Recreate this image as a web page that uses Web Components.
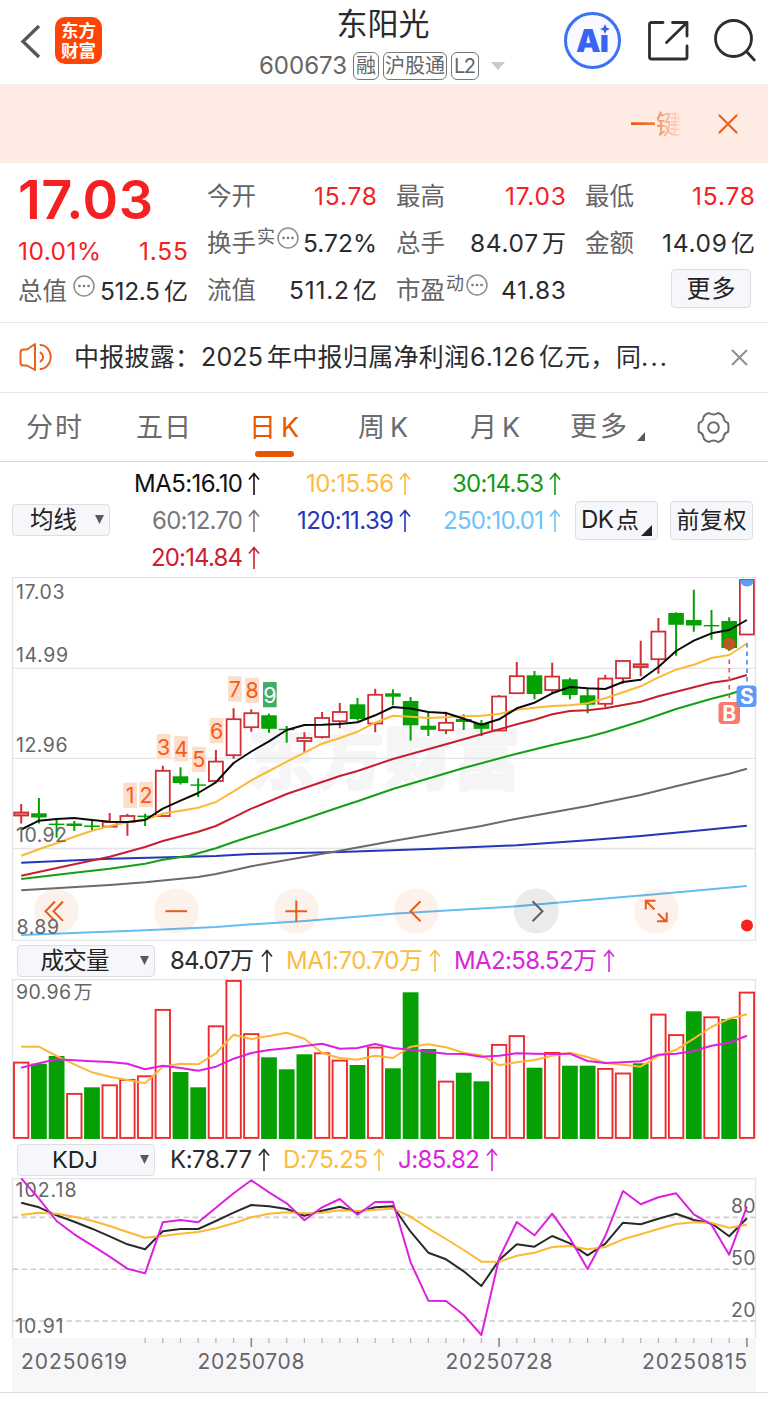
<!DOCTYPE html>
<html lang="zh-CN">
<head>
<meta charset="utf-8">
<title>东阳光 600673</title>
<style>
  body {
    margin: 0;
    width: 768px;
    height: 1403px;
    overflow: hidden;
    background: #fff;
    color: #2b2b2d;
    font-family: Inter, "Noto Sans CJK SC", sans-serif;
    font-size: 24px;
    line-height: 1;
  }
</style>
</head>
<body>
<app-header code="600673" name="东阳光"></app-header>
<promo-banner>一键</promo-banner>
<quote-panel>
  <quote-price slot="c1" price="17.03" percent="10.01%" change="1.55"></quote-price>
  <quote-cell slot="c1" label="总值" info value="512.5" w="60" unit="亿"></quote-cell>
  <quote-cell slot="c2" label="今开" value="15.78" w="63" up></quote-cell>
  <quote-cell slot="c2" label="换手" note="实" info value="5.72%" w="74"></quote-cell>
  <quote-cell slot="c2" label="流值" value="511.2" w="60" unit="亿"></quote-cell>
  <quote-cell slot="c3" label="最高" value="17.03" w="61" up></quote-cell>
  <quote-cell slot="c3" label="总手" value="84.07" w="68" unit="万"></quote-cell>
  <quote-cell slot="c3" label="市盈" note="动" info value="41.83" w="65"></quote-cell>
  <quote-cell slot="c4" label="最低" value="15.78" w="63" up></quote-cell>
  <quote-cell slot="c4" label="金额" value="14.09" w="65" unit="亿"></quote-cell>
  <tool-button slot="c4" style="--w: 78px; --h: 37px; align-self: flex-end; margin: 2px 4px 0 0"><fit-text w="49">更多</fit-text></tool-button>
</quote-panel>
<news-bar></news-bar>
<period-tabs></period-tabs>
<ma-panel></ma-panel>
<kline-chart></kline-chart>
<indicator-bar name="成交量" name-width="69">
  <trend-value w="84" style="margin-left: 15.500px; --gap: 7px">84.07万</trend-value>
  <trend-value w="137" style="color: #fbbc3f; margin-left: 11.500px; --gap: 6px">MA1:70.70万</trend-value>
  <trend-value w="143" style="color: #d926dc; margin-left: 11.500px; --gap: 6px">MA2:58.52万</trend-value>
</indicator-bar>
<volume-chart></volume-chart>
<indicator-bar name="KDJ" name-width="46">
  <trend-value w="82" style="margin-left: 15.500px; --gap: 5.500px">K:78.77</trend-value>
  <trend-value w="85" style="color: #fbbc3f; margin-left: 12px; --gap: 5px">D:75.25</trend-value>
  <trend-value w="82" style="color: #d926dc; margin-left: 11.500px; --gap: 6px">J:85.82</trend-value>
</indicator-bar>
<kdj-chart></kdj-chart>
<date-axis></date-axis>

<script>
const UP = '#cf3036';
const DOWN = '#04a004';
const COUNT = 42;

// Horizontal centre of a trading day in the charts
const dayX = index => 21.2 + index * 17.7;

class BaseElement extends HTMLElement {
  connectedCallback() {
    if (this.shadowRoot) return;
    const root = this.attachShadow({ mode: 'open' });
    root.innerHTML = `<style>:host { display: block; box-sizing: border-box; } svg { display: block; } ${this.styles()}</style>${this.render()}`;
  }

  attr(name, fallback = '') {
    return this.getAttribute(name) || fallback;
  }

  styles() { return ''; }

  render() { return '<slot></slot>'; }
}

class AppHeader extends BaseElement {
  styles() {
    return `
      :host { height: 85px; border-bottom: 1px solid #eeeff1; display: grid; grid-template-columns: 259px 250px 1fr; }
      .left { display: flex; padding: 17px 0 0 20px; }
      .back { margin: 7px 14px 0 0; }
      .logo { width: 47px; height: 47px; border-radius: 10px; background: #ff4505; color: #fff; text-align: center;
        font-size: 17.5px; font-weight: 700; line-height: 19.5px; padding-top: 4px; box-sizing: border-box; }
      .title { text-align: center; font-size: 31px; margin-top: 8px; height: 44px; line-height: 31px; padding-right: 2px; }
      .sub { display: flex; align-items: center; height: 28px; color: #666; }
      .tag { box-sizing: border-box; height: 28px; border: 1.5px solid #777; border-radius: 6px; margin-right: 4px;
        font-size: 20px; line-height: 26px; text-align: center; white-space: nowrap; }
      .code { width: 94px; }
      .right { display: flex; padding: 12px 0 0 55px; }
      .ai { width: 57px; height: 57px; box-sizing: border-box; border: 3px solid #3b71f3; border-radius: 50%; color: #3764f4;
        font-size: 31px; font-weight: 900; line-height: 52px; text-align: center; position: relative; background: #f8faff; }
      .ai svg { position: absolute; right: 8px; top: 9px; }
    `;
  }

  render() {
    return `
      <div class="left">
        <svg class="back" width="21" height="36" fill="none" stroke="#58585a" stroke-width="3.4"><path d="M19 2 3 17.500 19 33"/></svg>
        <div class="logo">东方<br>财富</div>
      </div>
      <div>
        <div class="title">${this.attr('name')}</div>
        <div class="sub">
          <span class="code"><fit-text w="88">${this.attr('code')}</fit-text></span>
          <span class="tag" style="width: 26px">融</span>
          <span class="tag" style="width: 64px">沪股通</span>
          <span class="tag" style="width: 28px"><fit-text w="22">L2</fit-text></span>
          <svg width="14" height="8" style="margin-left: 8px"><path fill="#c9c9cb" d="M0 0h14l-7 8z"/></svg>
        </div>
      </div>
      <div class="right">
        <div class="ai"><fit-text w="33">Aı</fit-text><svg width="10" height="10"><path fill="#3764f4" d="M5 0 6.500 3.500 10 5 6.500 6.500 5 10 3.500 6.500 0 5 3.500 3.500z"/></svg></div>
        <svg width="42" height="43" style="margin: 8px 0 0 26px" fill="none" stroke="#2e2e30" stroke-width="2.800" stroke-linecap="round" stroke-linejoin="round"><path d="M16 2.500H4.500q-2 0-2 2V37q0 2 2 2H38q2 0 2-2V26M25.500 2.500H40V16M19.500 22.500 39.500 3"/></svg>
        <svg width="44" height="46" style="margin: 6px 0 0 24px" fill="none" stroke="#2e2e30" stroke-width="2.800" stroke-linecap="round"><circle cx="20.500" cy="20.500" r="18"/><path d="M33.500 33.500 41.300 42"/></svg>
      </div>
    `;
  }
}

class PromoBanner extends BaseElement {
  styles() {
    return `
      :host { height: 78px; background: #feece4; display: flex; align-items: center; justify-content: flex-end; }
      span { font-size: 26px; font-weight: 500; padding-top: 2px; background: linear-gradient(90deg, #e65000 0, #ec7f48 45%, #f2a886 62%, #fce4d9 100%);
        -webkit-background-clip: text; background-clip: text; color: transparent; }
    `;
  }

  render() {
    return `
      <span><slot></slot></span>
      <svg width="20" height="20" style="margin: 0 30px 0 36px" stroke="#e9631f" stroke-width="2.200" stroke-linecap="round"><path d="M1.500 1.500l17 17M18.500 1.500l-17 17"/></svg>
    `;
  }
}

class QuotePanel extends BaseElement {
  styles() {
    return `
      :host { height: 160px; border-bottom: 1px solid #e6e6e9; padding: 10px 13px 0 19px; display: grid;
        grid-template-columns: 169px 170px 170px 170px; column-gap: 19px; }
      .col { display: flex; flex-direction: column; }
    `;
  }

  render() {
    return [1, 2, 3, 4].map(n => `<div class="col"><slot name="c${n}"></slot></div>`).join('');
  }
}

class QuotePrice extends BaseElement {
  styles() {
    return `
      :host { color: #f42022; height: 95px; }
      .price { font-size: 54px; font-weight: 600; height: 65.500px; line-height: 54px; margin-left: -1px; }
      .row { display: flex; justify-content: space-between; font-size: 24.500px; margin-left: -1px; }
    `;
  }

  render() {
    return `
      <div class="price"><fit-text w="135">${this.attr('price')}</fit-text></div>
      <div class="row"><fit-text w="83">${this.attr('percent')}</fit-text><fit-text w="49">${this.attr('change')}</fit-text></div>
    `;
  }
}

class QuoteCell extends BaseElement {
  styles() {
    return `
      :host { height: 47px; display: flex; align-items: center; color: #2b2b2d; }
      :host([up]) .value { color: #f42022; }
      .label { color: #646466; font-size: 24.500px; }
      .note { color: #646466; font-size: 18px; margin: -13px 2px 0 1px; }
      .info { margin-top: -11px; }
      :host([label="总值"]) .info { margin-left: 6px; }
      :host([label="总值"]) .label { margin-left: -1px; }
      .value { margin-left: auto; display: flex; align-items: center; font-size: 24.500px; }
      .unit { margin-left: 4px; font-size: 24px; }
    `;
  }

  render() {
    const note = this.hasAttribute('note') ? `<span class="note">${this.attr('note')}</span>` : '';
    const info = this.hasAttribute('info')
      ? '<svg class="info" width="22" height="22"><circle cx="11" cy="11" r="10" fill="none" stroke="#8d8d8f" stroke-width="1.500"/><g fill="#777"><circle cx="6.500" cy="11" r="1.300"/><circle cx="11" cy="11" r="1.300"/><circle cx="15.500" cy="11" r="1.300"/></g></svg>'
      : '';
    const unit = this.hasAttribute('unit') ? `<span class="unit">${this.attr('unit')}</span>` : '';
    return `<span class="label">${this.attr('label')}</span>${note}${info}<span class="value"><fit-text w="${this.attr('w')}">${this.attr('value')}</fit-text>${unit}</span>`;
  }
}

class ToolButton extends BaseElement {
  styles() {
    return `
      :host { width: var(--w); height: var(--h); box-sizing: content-box; border: 1px solid #dcdee2; border-radius: 4px; background: #f6f7fa;
        display: flex; align-items: center; justify-content: center; color: #222; position: relative; }
    `;
  }
}

class NewsBar extends BaseElement {
  styles() {
    return `
      :host { height: 70px; border-bottom: 1px solid #e6e6e9; display: flex; align-items: center; padding: 0 20px 1px 19px; }
      .text { flex: 1; white-space: nowrap; font-size: 25px; padding-left: 20px; }
      .n { margin: 0 4px 0 1px; }
    `;
  }

  render() {
    return `
      <svg width="35" height="30" fill="none" stroke="#e8601c" stroke-width="2" stroke-linejoin="round" stroke-linecap="round"><path d="M16 2v26L8 23.500H4.500q-3 0-3-3v-10q0-3 3-3H8zM21.500 10.500q5.500 4.500 0 9M21.500 3q5.500 0 8.700 6 3 6 0 12-3.200 6-8.700 6"/></svg>
      <div class="text"><fit-text w="126">中报披露：</fit-text><span class="n"><fit-text w="62">2025</fit-text></span><fit-text w="202">年中报归属净利润</fit-text><span class="n"><fit-text w="65">6.126</fit-text></span><fit-text w="102">亿元，同</fit-text><fit-text w="26">...</fit-text></div>
      <svg width="17" height="17" stroke="#8f8f91" stroke-width="2"><path d="M1 1l15 15M16 1 1 16"/></svg>
    `;
  }
}

class PeriodTabs extends BaseElement {
  styles() {
    return `
      :host { height: 69px; border-bottom: 1.500px solid #d3d6dd; padding-left: 26px; color: #6b6b6d; font-size: 27px;
        display: grid; grid-template-columns: 110px 113px 109px 112px 100px 127px 1fr; align-items: center; }
      .on { color: #ea5504; position: relative; }
      .on::after { content: ''; position: absolute; left: 6px; top: 37px; width: 39px; height: 6px; border-radius: 3px; background: #ea5504; }
      .gap { margin-left: 5px; }
    `;
  }

  render() {
    return `
      <span><fit-text w="56">分时</fit-text></span>
      <span><fit-text w="55">五日</fit-text></span>
      <span class="on">日<span class="gap">K</span></span>
      <span>周<span class="gap">K</span></span>
      <span>月<span class="gap">K</span></span>
      <span><fit-text w="57">更多</fit-text><svg width="8" height="9" style="display: inline-block; margin-left: 10px; vertical-align: -5px"><path fill="#58585a" d="M8 0v9H0z"/></svg></span>
      <svg width="33" height="33" viewBox="-16.500 -16.500 33 33" fill="none" stroke="#6b6b6d" stroke-width="2" stroke-linejoin="round"><path d="M-4.500-14.500Q0-11.500 4.500-14.500Q8.500-13.500 10-10.500Q10-6 14.500-4.500Q15.500 0 14.500 4.500Q10 6 10 10.500Q8.500 13.500 4.500 14.500Q0 11.500-4.500 14.500Q-8.500 13.500-10 10.500Q-10 6-14.500 4.500Q-15.500 0-14.500-4.500Q-10-6-10-10.500Q-8.500-13.500-4.500-14.500Z"/><circle r="5.300"/></svg>
    `;
  }
}

class TrendValue extends BaseElement {
  styles() {
    return ':host { display: flex; align-items: center; justify-content: flex-end; white-space: nowrap; } svg { margin: 0 1.500px 0 var(--gap, 4.500px); }';
  }

  render() {
    return `
      <fit-text w="${this.attr('w')}">${this.textContent}</fit-text>
      <svg width="12" height="23" fill="none" stroke="currentColor" stroke-width="1.600"><path d="M6 23V1.500M1 7.500l5-6 5 6"/></svg>
    `;
  }
}

class SelectBox extends BaseElement {
  styles() {
    return `
      :host { width: var(--w); height: 32px; border: 1px solid #dcdee2; border-radius: 4px; background: #f6f7fa;
        display: flex; align-items: center; justify-content: center; padding-right: var(--pr, 21px); font-size: 23.500px; color: #222; position: relative; }
      svg { position: absolute; right: 5px; top: 10px; }
    `;
  }

  render() {
    return '<slot></slot><svg width="9" height="9"><path fill="#5a5a5c" d="M0 0h9L4.500 9z"/></svg>';
  }
}

class MaPanel extends BaseElement {
  styles() {
    return `
      :host { height: 115px; display: grid; grid-template-columns: 98px 151px 151px 150px 1fr; padding-left: 12px; align-items: center; }
      .col { display: grid; grid-template-rows: 37px 37px 37px; align-self: start; padding-top: 3px; }
      .tools { display: flex; gap: 12px; padding-left: 13px; margin-top: 1px; }
      .corner { position: absolute; right: 5px; bottom: 3px; }
    `;
  }

  render() {
    return `
      <select-box style="--w: 98px; --pr: 15px"><fit-text w="47">均线</fit-text></select-box>
      <div class="col">
        <trend-value w="109" style="color: #111">MA5:16.10</trend-value>
        <trend-value w="91" style="color: #77777a">60:12.70</trend-value>
        <trend-value w="92" style="color: #cc2030">20:14.84</trend-value>
      </div>
      <div class="col">
        <trend-value w="88" style="color: #fbbc3f">10:15.56</trend-value>
        <trend-value w="97" style="color: #2438b8">120:11.39</trend-value>
      </div>
      <div class="col">
        <trend-value w="92" style="color: #169a16">30:14.53</trend-value>
        <trend-value w="101" style="color: #6fc3f8">250:10.01</trend-value>
      </div>
      <div class="tools">
        <tool-button style="--w: 68px; --h: 37px; padding-right: 13px"><fit-text w="33">DK</fit-text><span style="margin-left: 2px; font-size: 23px">点</span><svg width="11" height="11" style="position: absolute; right: 5px; bottom: 3px"><path fill="#222" d="M11 0v11H0z"/></svg></tool-button>
        <tool-button style="--w: 81px; --h: 37px; font-size: 23px"><fit-text w="70">前复权</fit-text></tool-button>
      </div>
    `;
  }
}

class IndicatorBar extends BaseElement {
  styles() {
    return ':host { height: 38px; display: flex; align-items: center; padding: 1px 0 0 16.500px; }';
  }

  render() {
    return `<select-box style="--w: 138px"><fit-text w="${this.attr('name-width')}">${this.attr('name')}</fit-text></select-box><slot></slot>`;
  }
}

class ChartElement extends BaseElement {
  polyline(values, color, width = 2) {
    const points = values.map((y, i) => `${dayX(i).toFixed(1)},${y}`).join(' ');
    return `<polyline points="${points}" fill="none" stroke="${color}" stroke-width="${width}" stroke-linejoin="round"/>`;
  }

  // pairs: [day, y, day, y, ...], days in between lie on the straight line
  sparse(pairs, color) {
    let points = '';
    for (let i = 0; i < pairs.length; i += 2) points += `${dayX(pairs[i]).toFixed(1)},${pairs[i + 1]} `;
    return `<polyline points="${points}" fill="none" stroke="${color}" stroke-width="2"/>`;
  }

  label(text, x, y, length, size = 19.5, color = '#666668') {
    return `<text x="${x}" y="${y}" font-size="${size}" fill="${color}" textLength="${length}">${text}</text>`;
  }
}

// day: [rising, high, body top, body bottom, low]
const CANDLES = [
  [1, 804, 812.5, 815.5, 823.5], [0, 798, 813.3, 817.5, 823.5], [0, 818.3, 823.6, 825, 837.7], [0, 821, 823.5, 826, 831],
  [0, 820.5, 825.5, 827, 830], [1, 813, 822, 826.6, 827], [1, 813.7, 816, 822, 835.7], [0, 813.7, 815.6, 817, 826],
  [1, 765.7, 770.8, 816, 816.5], [0, 767.3, 776.3, 783, 784.5], [0, 778.3, 784.4, 785.8, 797], [1, 750, 761.6, 781, 781.3],
  [1, 708.3, 719.2, 755.2, 758.7], [1, 709.3, 713.2, 727.2, 731.7], [0, 713.7, 715.3, 728.8, 732.7], [0, 726, 728.8, 730.2, 742.7],
  [1, 732.3, 738, 741, 752], [1, 712, 718, 737, 738.5], [1, 703, 712, 721.2, 728.3], [0, 698, 704.3, 719, 720.5],
  [1, 688.7, 694.8, 723.5, 732.3], [0, 689.3, 693.3, 696.7, 705.3], [0, 697, 701, 725.3, 740.7], [0, 712.7, 725.7, 729.8, 736],
  [1, 711.7, 722.8, 730.2, 734], [0, 714.3, 719, 722, 730], [0, 720, 723, 728.8, 736], [1, 695, 696.5, 730.5, 731],
  [1, 662, 676.2, 693.2, 693.5], [0, 671, 675.3, 694, 699.3], [1, 662.7, 676.6, 690, 693], [0, 677.7, 679.3, 695, 699.3],
  [0, 688.3, 695.3, 704.7, 713.3], [1, 674.7, 678.6, 703.8, 707.3], [1, 660.5, 661, 678.2, 683.7], [1, 640.7, 664.3, 667, 676.3],
  [1, 618, 631.6, 659.2, 673.7], [0, 612.3, 613, 624.8, 655.7], [0, 589.7, 620, 625.5, 631.7], [0, 610, 625, 626.4, 639.7],
  [0, 617.3, 621, 648, 651], [1, 580, 580, 634.5, 635],
];

const MA5 = [829.5, 820.7, 819, 818, 820, 821.7, 822, 820, 808.7, 800.7, 793, 782.3, 763, 751.5, 741.3, 730, 725, 724.7, 724, 722.3, 715.3,
  707, 708.5, 712, 713, 718.7, 724.7, 719.3, 708.3, 702.7, 693.3, 687, 688.3, 689, 682, 679.7, 667, 651, 640.7, 633.3, 630, 620];
const MA10 = [855.7, 849.3, 843.3, 836.7, 830.7, 826, 822.3, 819.7, 813.7, 810.7, 807.7, 802, 791.3, 780.3, 771, 761.7, 752.7, 743.7, 738, 731.7, 722.7,
  715.7, 716.7, 718, 717.3, 716.3, 715.7, 714, 709.7, 707.7, 706, 705.3, 703.3, 698.3, 692.3, 686.3, 677.3, 669.7, 664.7, 658, 655, 643.5];

class KlineChart extends ChartElement {
  styles() { return ':host { height: 364px; }'; }

  candle([rising, high, top, bottom, low], index) {
    const x = dayX(index);
    const left = (x - 7).toFixed(1);
    if (!rising) {
      return `<path stroke="${DOWN}" stroke-width="2" d="M${x} ${high}V${low}"/><rect x="${(x - 7.8).toFixed(1)}" y="${top}" width="15.600" height="${bottom - top}" fill="${DOWN}"/>`;
    }
    const fill = bottom - top < 3.05 && index !== 16 ? '#e88b8d' : '#fff';
    return `<path stroke="${UP}" stroke-width="2" d="M${x} ${high}V${top}M${x} ${bottom}V${low}"/><rect x="${left}" y="${top}" width="14" height="${bottom - top}" fill="${fill}" stroke="${UP}" stroke-width="1.800"/>`;
  }

  counts() {
    const boxes = [[123.3, 782.7], [139.2, 782], [156.7, 734], [174.3, 736], [192, 746.7], [209.7, 718], [228, 676.3], [245.3, 677.7], [263, 682]];
    return boxes.map(([x, y], i) => {
      const last = i === 8;
      return `<rect x="${x}" y="${y}" width="13.700" height="25.300" fill="${last ? '#3fae64' : '#fdddcc'}"/>
        <text x="${x + 6.9}" y="${y + 20.5}" font-size="21.500" text-anchor="middle" fill="${last ? '#fff' : '#fa5b10'}">${i + 1}</text>`;
    }).join('');
  }

  buttons() {
    const icons = [
      'M55 901.500l-9.500 9.700 9.500 9.700M63 901.500l-9.500 9.700 9.500 9.700', 'M165.500 911.200h21.500', 'M285.500 911.200H307M296.300 900.500V922',
      'M420.500 901.200l-10 10 10 10', 'M532.500 901.200l10 10-10 10',
      'M654.500 909.500l-8-8M645.800 909.500v-8.700h9.700M658 913.500l8 8M666.700 912.500v8.700h-9.700',
    ];
    return icons.map((d, i) => {
      const grey = i === 4;
      return `<circle cx="${56.3 + i * 120}" cy="911" r="22.500" fill="${grey ? '#000' : '#ea5504'}" fill-opacity=".08"/>
        <path d="${d}" fill="none" stroke="${grey ? '#606062' : '#ea5a18'}" stroke-width="2"/>`;
    }).join('');
  }

  render() {
    return `<svg width="768" height="364" viewBox="0 577 768 364">
      <text x="247" y="784" font-size="69" font-weight="900" fill="#f5f5f6" stroke="#f5f5f6" stroke-width="1.500" textLength="274">东方财富</text>
      <g fill="none" stroke="#e3e4e8" stroke-width="1.300"><rect x="12.500" y="577.500" width="743" height="363"/><path d="M12.500 668.300h743M12.500 758.300h743M12.500 848.500h743"/></g>
      ${CANDLES.map((c, i) => this.candle(c, i)).join('')}
      ${this.counts()}
      ${this.sparse([0, 935, 7, 930.3, 11, 927, 13, 924.3, 16, 921, 21, 913.7, 28, 906.3, 32, 900, 36, 894, 41, 886], '#62bdf3')}
      ${this.sparse([0, 862.7, 5, 858.7, 11, 856, 13, 854, 18, 852, 23, 849, 28, 845.3, 32, 840.3, 35, 836, 38, 831, 41, 825.7], '#2337b9')}
      ${this.sparse([0, 890.3, 5, 885, 7, 882.3, 10, 877, 11, 874, 12, 870.3, 13, 866.3, 18, 850.7, 21, 841, 26, 826, 28, 818.7, 32, 806, 33, 802.3, 35, 795, 37, 786.3, 39, 777.7, 40, 773.7, 41, 768.7], '#6b6b6d')}
      ${this.sparse([0, 879, 3, 872.7, 5, 868.7, 7, 863.7, 8, 859.7, 9.5, 855.7, 11, 848.3, 12, 842, 13, 836.3, 15, 825, 18, 807, 19, 801.3, 21, 789, 25, 768, 28, 753.7, 30, 745, 32, 737, 33, 732.3, 35, 721.3, 37, 709, 39, 698.7, 40, 694.3, 41, 688.7], '#14a014')}
      ${this.sparse([0, 875.7, 3, 864.3, 5, 856.7, 7, 847, 8, 841, 10, 831.7, 11, 826, 12, 817.3, 13, 808.7, 15, 794, 18, 776, 19, 771, 21, 759, 24, 744.3, 26, 734.3, 28, 724.3, 29, 719.7, 30, 714.3, 31, 711, 32, 710.3, 33, 708.3, 35, 701.7, 36, 696.3, 37, 691.7, 39, 682.7, 40, 680.3, 41, 675], '#c81f2e')}
      ${this.polyline(MA10, '#fbb936')}
      ${this.polyline(MA5, '#0a0a0a')}
      <circle cx="729.300" cy="643.700" r="6.300" fill="#b85a1e"/>
      <path d="M740 580h14q-1 6.500-7 6.500t-7-6.500z" fill="#5b9cf5"/>
      <path d="M729.300 659.500V702" stroke="#e8564e" stroke-width="1.700" stroke-dasharray="4.500 4"/>
      <path d="M747 643V686" stroke="#4b8fe8" stroke-width="1.700" stroke-dasharray="4.500 4"/>
      <rect x="718.500" y="702" width="21.500" height="22" rx="4" fill="#fc786d"/>
      <rect x="736.500" y="685.500" width="20" height="21.500" rx="4" fill="#5a9bf6"/>
      <g font-size="21" font-weight="700" fill="#fff" text-anchor="middle"><text x="729.300" y="720.700">B</text><text x="747" y="704">S</text></g>
      ${this.buttons()}
      <circle cx="747" cy="925.500" r="6" fill="#f9201f"/>
      ${this.label('17.03', 16, 598.5, 48.5)}${this.label('14.99', 16, 661.5, 52)}${this.label('12.96', 16, 752, 51.5)}
      ${this.label('10.92', 16, 842.3, 51)}${this.label('8.89', 16.5, 933.5, 42.5)}
    </svg>`;
  }
}

// day: [rising, bar top]
const VOLUMES = [
  [1, 1062], [0, 1063.7], [0, 1056], [1, 1093.3], [0, 1087.3], [1, 1084.7], [1, 1079.3], [1, 1075.7], [1, 1009.3], [0, 1072], [0, 1087.3],
  [1, 1025.7], [1, 980.3], [1, 1033.5], [0, 1057.3], [0, 1069.3], [0, 1054.3], [1, 1052.7], [1, 1060], [0, 1065], [1, 1047], [0, 1068.3],
  [0, 992.3], [0, 1049], [1, 1081], [0, 1072.7], [0, 1081.3], [1, 1044.3], [1, 1035.5], [0, 1067.7], [1, 1052.3], [0, 1065.7], [0, 1065.7],
  [1, 1068.3], [1, 1072.9], [0, 1063.3], [1, 1014], [1, 1034.5], [0, 1011.3], [1, 1016.7], [0, 1019], [1, 992],
];
const VOLUME_MA1 = [1046.7, 1046.7, 1056, 1064.3, 1072.3, 1076.7, 1080, 1083.3, 1066.7, 1063.7, 1064.3, 1053.3, 1034.7, 1039, 1036, 1032.7, 1038.7, 1053, 1058, 1059.7, 1055.7,
  1058, 1046.7, 1044.3, 1047.3, 1052.7, 1055.3, 1065.3, 1062.3, 1060, 1055.7, 1052.7, 1057, 1063, 1064.7, 1066.7, 1056, 1049.7, 1038.7, 1027, 1018.7, 1014.3];
const VOLUME_MA2 = [1067.7, 1063.3, 1059.3, 1060.3, 1061.3, 1062, 1063.7, 1069.3, 1065.7, 1068, 1070.7, 1066.7, 1058.7, 1053, 1050, 1048.3, 1046, 1043.7, 1048.7, 1048, 1044,
  1048, 1049.7, 1051.7, 1053.7, 1054, 1056.7, 1055.7, 1053.3, 1053.7, 1054, 1053.7, 1061, 1063, 1062.3, 1061.3, 1054.7, 1053.7, 1051, 1045.7, 1042.7, 1035.7];

class VolumeChart extends ChartElement {
  styles() { return ':host { height: 161px; }'; }

  render() {
    const bars = VOLUMES.map(([rising, top], i) => (rising
      ? `<rect x="${(dayX(i) - 7.2).toFixed(1)}" y="${top + 0.6}" width="14.400" height="${1137.3 - top}" fill="#fff" stroke="#ee2b2d" stroke-width="1.900"/>`
      : `<rect x="${(dayX(i) - 7.9).toFixed(1)}" y="${top}" width="15.800" height="${1139 - top}" fill="${DOWN}"/>`)).join('');
    return `<svg width="768" height="161" viewBox="0 979 768 161">
      <path d="M12.500 1138.500V979.500h743V1138.500" fill="none" stroke="#e3e4e8" stroke-width="1.300"/>
      ${bars}
      ${this.polyline(VOLUME_MA1, '#fbb936')}
      ${this.polyline(VOLUME_MA2, '#dd20e0')}
      ${this.label('90.96', 16, 998.7, 55)}${this.label('万', 73.5, 998.7, 19, 19)}
    </svg>`;
  }
}

const KDJ_K = [1202.7, 1207.3, 1215.3, 1221.7, 1228.7, 1236.3, 1244.3, 1249.3, 1231.3, 1229, 1229, 1221, 1212.7, 1205, 1206.3, 1209, 1215.7, 1210.7, 1206.7, 1212.3, 1207.3,
  1206.3, 1231.7, 1252.7, 1259.3, 1271.3, 1286, 1260, 1244.3, 1246.7, 1236, 1243.3, 1255.3, 1243.7, 1222.7, 1224.3, 1218.7, 1213.7, 1220, 1223.3, 1236.3, 1218.3];
const KDJ_D = [1215, 1212.7, 1213.7, 1216.7, 1220.7, 1226, 1232, 1237.7, 1236, 1233.7, 1232, 1228.3, 1223.3, 1217.3, 1213.7, 1212.3, 1213.3, 1212.7, 1210.3, 1211, 1209.7,
  1208.7, 1216.7, 1228.3, 1239, 1250, 1261.7, 1261.7, 1255.7, 1252.7, 1247, 1246, 1249.3, 1247, 1239.3, 1234.3, 1229, 1224, 1222.3, 1223, 1227.7, 1224.7];
const KDJ_J = [1178.3, 1198.7, 1221, 1234.3, 1245.3, 1256.7, 1268.7, 1273.3, 1222.3, 1220, 1222.3, 1207.7, 1193.3, 1180.3, 1192.3, 1203.3, 1220.3, 1207.3, 1199, 1214.7, 1202,
  1201.7, 1262.3, 1300.7, 1301, 1315, 1335, 1258.3, 1222, 1235.3, 1213.7, 1238.3, 1269, 1236, 1191, 1204.3, 1197.3, 1193.3, 1214.3, 1224.7, 1254.7, 1206.7];

class KdjChart extends ChartElement {
  styles() { return ':host { height: 160px; }'; }

  render() {
    return `<svg width="768" height="160" viewBox="0 1178 768 160">
      <path d="M12.500 1338V1178.500h743V1338" fill="none" stroke="#e3e4e8" stroke-width="1.300"/>
      <path d="M12.500 1217.400h743M12.500 1269.200h743M12.500 1321h743" stroke="#cdcdcf" stroke-width="1.600" stroke-dasharray="5.500 3.500"/>
      ${this.label('102.18', 15.5, 1197, 61)}${this.label('10.91', 15.5, 1333, 48)}
      ${this.label('80', 731, 1213, 24.5)}${this.label('50', 731, 1265, 24.5)}${this.label('20', 731, 1316.7, 24.5)}
      ${this.polyline(KDJ_K, '#2a2a2a')}
      ${this.polyline(KDJ_D, '#fbb936')}
      ${this.polyline(KDJ_J, '#dd20e0')}
    </svg>`;
  }
}

class DateAxis extends ChartElement {
  styles() { return ':host { height: 55px; border-bottom: 1.500px solid #d9dadf; }'; }

  render() {
    let ticks = '';
    for (let i = 7; i < COUNT; i += 1) {
      const major = i % 14 === 13;
      ticks += `<path d="M${dayX(i)} 1338v${major ? 9 : 5}" stroke="${major ? '#8a8a8c' : '#b4b4b6'}" stroke-width="${major ? 1.6 : 1.2}"/>`;
    }
    return `<svg width="768" height="54" viewBox="0 1338 768 54">
      <rect x="12" y="1338" width="744" height="54" fill="#f7f7fa"/>
      ${ticks}
      ${this.label('20250619', 21, 1368.7, 106, 21)}${this.label('20250708', 197.5, 1368.7, 107, 21)}
      ${this.label('20250728', 445.5, 1368.7, 107, 21)}${this.label('20250815', 642, 1368.7, 105, 21)}
    </svg>`;
  }
}

/**
 * Spreads or tightens its letters so that the run takes the width in "w".
 */
class FitText extends BaseElement {
  connectedCallback() {
    super.connectedCallback();
    const width = Number(this.attr('w'));
    const letters = this.textContent.trim().length;
    const spacing = (width - this.getBoundingClientRect().width) / Math.max(letters - 1, 1);
    this.style.letterSpacing = `${spacing}px`;
    this.style.marginRight = `${-spacing}px`;
  }

  styles() { return ':host { display: inline-block; white-space: nowrap; }'; }
}

customElements.define('app-header', AppHeader);
customElements.define('promo-banner', PromoBanner);
customElements.define('quote-panel', QuotePanel);
customElements.define('quote-price', QuotePrice);
customElements.define('quote-cell', QuoteCell);
customElements.define('tool-button', ToolButton);
customElements.define('news-bar', NewsBar);
customElements.define('period-tabs', PeriodTabs);
customElements.define('ma-panel', MaPanel);
customElements.define('indicator-bar', IndicatorBar);
customElements.define('select-box', SelectBox);
customElements.define('trend-value', TrendValue);
customElements.define('kline-chart', KlineChart);
customElements.define('volume-chart', VolumeChart);
customElements.define('kdj-chart', KdjChart);
customElements.define('date-axis', DateAxis);
// Measures its text, so it comes after everything that sets fonts
customElements.define('fit-text', FitText);
</script>
</body>
</html>
